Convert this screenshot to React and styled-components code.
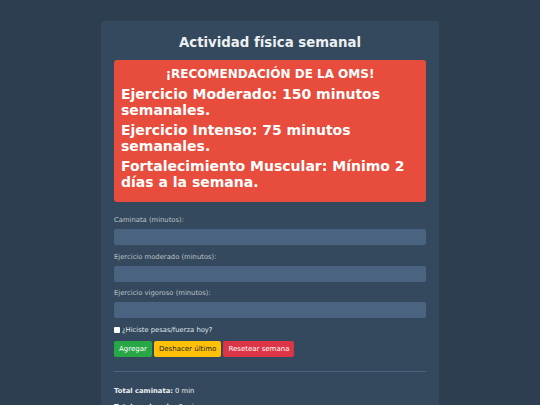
import React, { useState } from 'react';
import styled, { createGlobalStyle } from 'styled-components';

const GlobalStyle = createGlobalStyle`
  html, body {
    margin: 0;
    padding: 0;
    background-color: #2c3e50;
    font-family: "DejaVu Sans", Verdana, sans-serif;
    color: #ecf0f1;
  }
`;

const Page = styled.div`
  padding: 21px 0 40px;
`;

const Container = styled.div`
  width: 312px;
  margin: 0 auto;
  padding: 13px 13px 20px;
  background-color: #34495e;
  border-radius: 4px;
`;

const Title = styled.h2`
  margin: 0 0 8px;
  text-align: center;
  font-size: 13.3px;
  line-height: 18px;
  font-weight: bold;
  color: #ecf0f1;
`;

const Alert = styled.div`
  background-color: #e74c3c;
  color: #ffffff;
  border-radius: 3px;
  padding: 7px 7px 8px;
  margin-bottom: 13px;
`;

const AlertTitle = styled.h3`
  margin: 0 0 5px;
  text-align: center;
  font-size: 12px;
  line-height: 14px;
`;

const AlertLine = styled.p`
  margin: 0 0 4px;
  font-size: 14px;
  line-height: 16px;
  font-weight: bold;
`;

const Field = styled.div`
  margin-bottom: 6.5px;
`;

const Label = styled.label`
  display: block;
  font-size: 6.8px;
  line-height: 11px;
  margin-bottom: 3px;
  color: #bdc3c7;
`;

const Input = styled.input`
  display: block;
  box-sizing: border-box;
  width: 100%;
  height: 16px;
  border: none;
  border-radius: 2px;
  background-color: #4a6380;
  color: #ecf0f1;
  padding: 0 5px;
  font-size: 7px;
`;

const CheckRow = styled.label`
  display: flex;
  align-items: center;
  gap: 2px;
  margin-top: 4px;
  font-size: 6.8px;
  line-height: 10px;
  color: #dfe6e9;
`;

const Check = styled.input`
  appearance: none;
  margin: 0;
  width: 6px;
  height: 6px;
  border-radius: 1px;
  background-color: #ffffff;
`;

const Buttons = styled.div`
  display: flex;
  gap: 2px;
  margin-top: 6.5px;
`;

const colors = {
  green: ['#28a745', '#ffffff'],
  yellow: ['#ffc107', '#212529'],
  red: ['#dc3545', '#ffffff'],
};

const Button = styled.button`
  height: 16px;
  padding: 0 5px;
  border: none;
  border-radius: 2px;
  font-family: inherit;
  font-size: 7px;
  background-color: ${(p) => colors[p.variant][0]};
  color: ${(p) => colors[p.variant][1]};
  cursor: pointer;
`;

const Divider = styled.hr`
  border: none;
  border-top: 1px solid #4a6380;
  margin: 14px 0 14px;
`;

const Total = styled.p`
  margin: 0 0 6px;
  font-size: 6.8px;
  line-height: 10px;
  color: #ecf0f1;

  strong {
    font-weight: bold;
  }
`;

export default function App() {
  const [walk, setWalk] = useState('');
  const [moderate, setModerate] = useState('');
  const [vigorous, setVigorous] = useState('');
  const [strength, setStrength] = useState(false);

  return (
    <Page>
      <GlobalStyle />
      <Container>
        <Title>Actividad física semanal</Title>

        <Alert>
          <AlertTitle>¡RECOMENDACIÓN DE LA OMS!</AlertTitle>
          <AlertLine>Ejercicio Moderado: 150 minutos semanales.</AlertLine>
          <AlertLine>Ejercicio Intenso: 75 minutos semanales.</AlertLine>
          <AlertLine>Fortalecimiento Muscular: Mínimo 2 días a la semana.</AlertLine>
        </Alert>

        <Field>
          <Label>Caminata (minutos):</Label>
          <Input type="number" value={walk} onChange={(e) => setWalk(e.target.value)} />
        </Field>
        <Field>
          <Label>Ejercicio moderado (minutos):</Label>
          <Input type="number" value={moderate} onChange={(e) => setModerate(e.target.value)} />
        </Field>
        <Field>
          <Label>Ejercicio vigoroso (minutos):</Label>
          <Input type="number" value={vigorous} onChange={(e) => setVigorous(e.target.value)} />
        </Field>

        <CheckRow>
          <Check type="checkbox" checked={strength} onChange={(e) => setStrength(e.target.checked)} />
          ¿Hiciste pesas/fuerza hoy?
        </CheckRow>

        <Buttons>
          <Button variant="green">Agregar</Button>
          <Button variant="yellow">Deshacer último</Button>
          <Button variant="red">Resetear semana</Button>
        </Buttons>

        <Divider />

        <Total><strong>Total caminata:</strong> 0 min</Total>
        <Total><strong>Total moderado:</strong> 0 min</Total>
        <Total><strong>Total vigoroso:</strong> 0 min</Total>
      </Container>
    </Page>
  );
}
